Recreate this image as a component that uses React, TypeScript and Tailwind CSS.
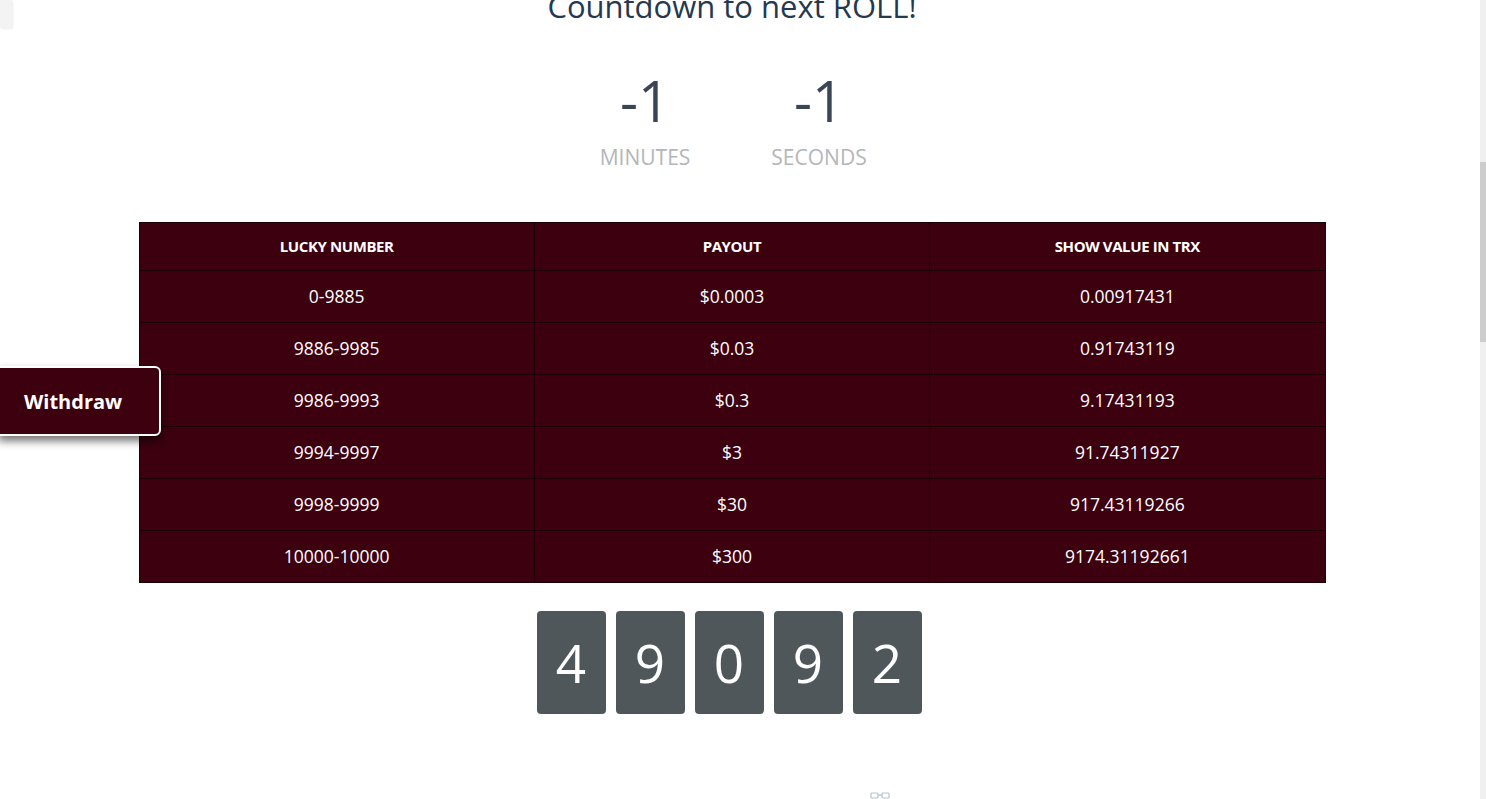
import * as React from "react";

const rows = [
  ["0-9885", "$0.0003", "0.00917431"],
  ["9886-9985", "$0.03", "0.91743119"],
  ["9986-9993", "$0.3", "9.17431193"],
  ["9994-9997", "$3", "91.74311927"],
  ["9998-9999", "$30", "917.43119266"],
  ["10000-10000", "$300", "9174.31192661"],
];

const digits = ["4", "9", "0", "9", "2"];

function CountUnit({ value, label }: { value: string; label: string }) {
  return (
    <div className="flex w-[150px] flex-col items-center">
      <span className="text-[56px] leading-[56px] text-[#3a4656]">{value}</span>
      <span className="mt-[17px] text-[21px] leading-[25px] text-[#b3b6ba]">{label}</span>
    </div>
  );
}

function Glasses() {
  return (
    <svg width="20" height="8" viewBox="0 0 20 8" fill="none" stroke="#b7c3d3" strokeWidth="1.2">
      <rect x="1" y="2" width="7" height="5" rx="1" />
      <rect x="12" y="2" width="7" height="5" rx="1" />
      <path d="M8 4h4" />
    </svg>
  );
}

export default function App() {
  return (
    <div
      className="relative flex h-[799px] w-full overflow-hidden bg-white"
      style={{ fontFamily: '"Open Sans", "Liberation Sans", sans-serif' }}
    >
      <main className="flex min-w-0 flex-1 flex-col items-center pr-[16px]">
        <h1 className="mt-[-12px] text-[31px] leading-[36px] text-[#24384f]">Countdown to next ROLL!</h1>

        <div className="mt-[48px] flex gap-[24px]">
          <CountUnit value="-1" label="MINUTES" />
          <CountUnit value="-1" label="SECONDS" />
        </div>

        <table className="mt-[52px] w-[1187px] table-fixed border-collapse bg-[#3c000f] text-white">
          <thead>
            <tr className="h-[48px]">
              {["LUCKY NUMBER", "PAYOUT", "SHOW VALUE IN TRX"].map((h) => (
                <th key={h} className="border border-[#1c0006] text-[15px] font-bold tracking-[-0.4px]">
                  {h}
                </th>
              ))}
            </tr>
          </thead>
          <tbody>
            {rows.map((r) => (
              <tr key={r[0]} className="h-[52px]">
                {r.map((c, i) => (
                  <td key={i} className="border border-[#1c0006] text-center text-[17.5px]">
                    {c}
                  </td>
                ))}
              </tr>
            ))}
          </tbody>
        </table>

        <div className="mt-[28px] mr-[6px] flex gap-[10px]">
          {digits.map((d, i) => (
            <div
              key={i}
              className="flex h-[103px] w-[69px] items-center justify-center rounded-[4px] bg-[#4f575b] text-[53px] text-white"
            >
              {d}
            </div>
          ))}
        </div>

        <div className="mt-[77px] ml-[296px]">
          <Glasses />
        </div>
      </main>

      <div className="flex w-[6px] flex-col bg-[#f0f0f0]">
        <div className="h-[162px]" />
        <div className="h-[180px] bg-[#cdcdcd]" />
      </div>

      <div className="absolute left-0 top-0 h-[28px] w-[12px] bg-[#f3f3f3] shadow-[1px_1px_2px_rgba(0,0,0,0.08)]" />

      <button className="absolute left-[-2px] top-[366px] flex h-[70px] w-[163px] items-center rounded-r-[6px] border-2 border-white bg-[#3c000f] pl-[24px] pt-[2px] text-[20px] font-bold text-white shadow-[0_5px_8px_rgba(0,0,0,0.55)]">
        Withdraw
      </button>
    </div>
  );
}
